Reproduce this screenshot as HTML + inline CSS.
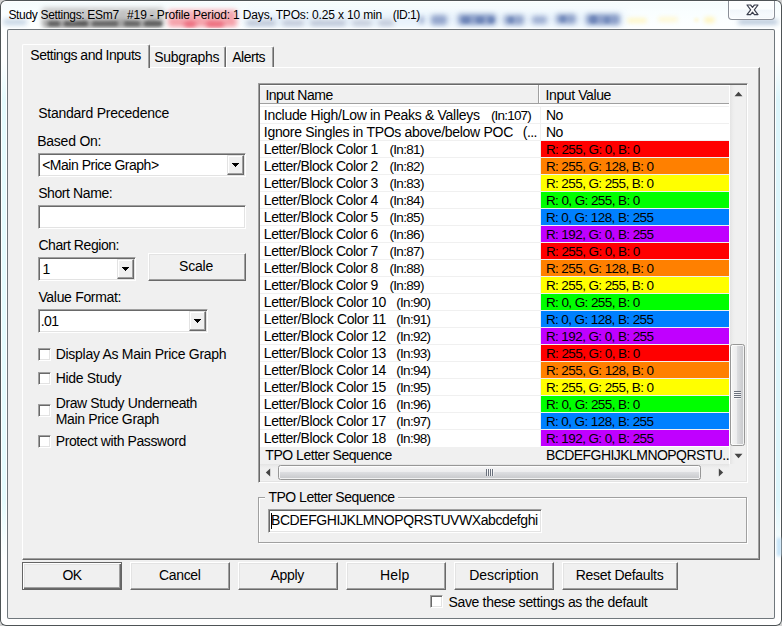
<!DOCTYPE html>
<html><head><meta charset="utf-8"><title>Study Settings</title>
<style>
*{box-sizing:border-box;margin:0;padding:0}
html,body{width:782px;height:626px;overflow:hidden;background:#d0d0d0}
body{font-family:"Liberation Sans",Arial,sans-serif;font-size:14px;color:#000;position:relative}
#ui,#ui *{position:absolute}
#win{position:absolute;left:0;top:0;width:782px;height:626px;border-radius:6px;overflow:hidden;
 background:linear-gradient(#f5fcfd,#f9feff 12px,#fdffff 28px,#fff 40px,#fff);
 box-shadow:inset 0 0 0 1px #4e5456, inset 0 0 0 2px rgba(255,255,255,.9)}
#win *{position:absolute}
#client{left:8px;top:30px;width:766px;height:588px;background:#f0f0f0;border-radius:1px;
 box-shadow:0 0 0 1px #70777c, 0 0 0 2px rgba(255,255,255,.7)}
.t{white-space:pre;line-height:15px;transform-origin:0 0}
.tt{text-shadow:0 0 4px rgba(255,255,255,.6),0 0 8px rgba(255,255,255,.5)}
.sunken{background:#fff;border:1px solid;border-color:#a0a0a0 #fff #fff #a0a0a0;
 box-shadow:inset 1px 1px 0 #696969, inset -1px -1px 0 #e3e3e3}
.btn{background:#f0f0f0;border:1px solid;border-color:#fff #696969 #696969 #fff;
 box-shadow:inset -1px -1px 0 #a0a0a0, inset 1px 1px 0 #e3e3e3}
.btn.def{border-color:#646464;box-shadow:inset 1px 1px 0 #fff,inset -1px -1px 0 #696969,inset -2px -2px 0 #a0a0a0,inset 2px 2px 0 #e3e3e3}
.dd{width:17px;height:20px;background:#f0f0f0;border:1px solid;border-color:#e3e3e3 #696969 #696969 #e3e3e3;
 box-shadow:inset -1px -1px 0 #a0a0a0, inset 1px 1px 0 #fff}
.cb{width:13px;height:13px;background:#fff;border:1px solid;border-color:#a0a0a0 #fff #fff #a0a0a0;
 box-shadow:inset 1px 1px 0 #696969, inset -1px -1px 0 #e3e3e3}
.bl{filter:blur(2.2px);border-radius:3px}
</style></head><body>

<div id="win">
<div style="left:3px;top:19px;width:24px;height:6px;background:#c4d4e4;filter:blur(2.5px);border-radius:3px"></div>
<div style="left:244px;top:12px;width:380px;height:15px;background:#e6f1fb;filter:blur(4px);border-radius:3px"></div>
<div style="left:42px;top:8px;width:122px;height:19px;background:#c2c2c2;filter:blur(2.5px);border-radius:3px"></div>
<div style="left:44px;top:20px;width:118px;height:7px;background:#999;filter:blur(2.5px);border-radius:3px"></div>
<div style="left:48px;top:21px;width:12px;height:5px;background:#606060;filter:blur(1.8px);border-radius:3px"></div>
<div style="left:64px;top:21px;width:24px;height:5px;background:#5a5a5a;filter:blur(1.8px);border-radius:3px"></div>
<div style="left:92px;top:21px;width:26px;height:5px;background:#666;filter:blur(1.8px);border-radius:3px"></div>
<div style="left:124px;top:21px;width:16px;height:5px;background:#666;filter:blur(1.8px);border-radius:3px"></div>
<div style="left:144px;top:21px;width:18px;height:5px;background:#606060;filter:blur(1.8px);border-radius:3px"></div>
<div style="left:168px;top:10px;width:69px;height:17px;background:#f5a0a9;filter:blur(2.5px);border-radius:3px"></div>
<div style="left:184px;top:21px;width:12px;height:6px;background:#ec6a7c;filter:blur(2px);border-radius:3px"></div>
<div style="left:206px;top:21px;width:18px;height:6px;background:#ec6a7c;filter:blur(2px);border-radius:3px"></div>
<div style="left:246px;top:20px;width:30px;height:6px;background:#bcc5d6;filter:blur(2.5px);border-radius:3px"></div>
<div style="left:282px;top:20px;width:22px;height:6px;background:#c0c8d8;filter:blur(2.5px);border-radius:3px"></div>
<div style="left:310px;top:20px;width:36px;height:6px;background:#bcc5d6;filter:blur(2.5px);border-radius:3px"></div>
<div style="left:352px;top:20px;width:20px;height:6px;background:#c4ccda;filter:blur(2.5px);border-radius:3px"></div>
<div style="left:378px;top:20px;width:16px;height:6px;background:#c0c8d8;filter:blur(2.5px);border-radius:3px"></div>
<div style="left:419px;top:16px;width:5px;height:8px;background:#a4b4d4;filter:blur(2.2px);border-radius:3px"></div>
<div style="left:431px;top:15px;width:16px;height:10px;background:#94a6cc;filter:blur(2.4px);border-radius:3px"></div>
<div style="left:458px;top:14px;width:38px;height:11px;background:#8a9ec8;filter:blur(2.4px);border-radius:3px"></div>
<div style="left:504px;top:15px;width:20px;height:10px;background:#94a6cc;filter:blur(2.4px);border-radius:3px"></div>
<div style="left:532px;top:16px;width:15px;height:8px;background:#9eafd2;filter:blur(2.4px);border-radius:3px"></div>
<div style="left:556px;top:14px;width:20px;height:10px;background:#90a3ca;filter:blur(2.4px);border-radius:3px"></div>
<div style="left:586px;top:14px;width:34px;height:11px;background:#8a9ec8;filter:blur(2.4px);border-radius:3px"></div>
<div style="left:462px;top:17px;width:8px;height:6px;background:#6e86b8;filter:blur(1.6px);border-radius:3px"></div>
<div style="left:476px;top:17px;width:8px;height:6px;background:#6e86b8;filter:blur(1.6px);border-radius:3px"></div>
<div style="left:488px;top:17px;width:6px;height:6px;background:#6e86b8;filter:blur(1.6px);border-radius:3px"></div>
<div style="left:508px;top:17px;width:6px;height:6px;background:#748cbc;filter:blur(1.6px);border-radius:3px"></div>
<div style="left:560px;top:16px;width:6px;height:6px;background:#748cbc;filter:blur(1.6px);border-radius:3px"></div>
<div style="left:590px;top:16px;width:7px;height:7px;background:#6e86b8;filter:blur(1.6px);border-radius:3px"></div>
<div style="left:604px;top:17px;width:6px;height:6px;background:#748cbc;filter:blur(1.6px);border-radius:3px"></div>
<div style="left:627px;top:18px;width:20px;height:5px;background:#fff7c8;filter:blur(2px);border-radius:3px"></div>
<div style="left:658px;top:17px;width:20px;height:5px;background:#fff8d4;filter:blur(2px);border-radius:3px"></div>
<div style="left:694px;top:18px;width:5px;height:4px;background:#fff8d4;filter:blur(1.5px);border-radius:3px"></div>
<div style="left:704px;top:17px;width:11px;height:6px;background:#fff5c0;filter:blur(2px);border-radius:3px"></div>
<div style="left:738px;top:20px;width:40px;height:4px;background:#a4b8d0;filter:blur(2.5px);border-radius:3px"></div>
<div id="close" style="left:728px;top:1px;width:47px;height:19px;border:1px solid #8a8f98;border-top:0;border-radius:0 0 4px 4px;background:linear-gradient(rgba(255,255,255,.75),rgba(255,255,255,.55) 45%,rgba(236,241,247,.6) 50%,rgba(250,252,254,.7));box-shadow:inset 0 0 0 1px rgba(255,255,255,.8)"></div>
<svg style="left:746px;top:4px" width="13" height="12" viewBox="0 0 13 12"><path d="M1 1h3.6l1.9 2.3 1.9-2.3h3.6L8.3 5.8 12 10.6h-3.6l-1.9-2.4-1.9 2.4h-3.6l3.7-4.8z" fill="#fff" stroke="#3a3f4d" stroke-width="1.2" stroke-linejoin="round"/></svg>
<div class="t tt" style="left:8.40px;top:7px;line-height:17px;font-size:12px;letter-spacing:-0.318px;color:#000">Study Settings: ESm7</div>
<div class="t tt" style="left:127.10px;top:7px;line-height:17px;font-size:12px;letter-spacing:-0.154px">#19 - Profile Period: 1 Days, TPOs: 0.25 x 10 min</div>
<div class="t tt" style="left:392.80px;top:7px;line-height:17px;font-size:12px;letter-spacing:-0.521px">(ID:1)</div>
<div style="left:2px;top:60px;width:4px;height:500px;background:linear-gradient(rgba(228,251,253,0),#e4fbfd 40px,#e4fbfd 440px,rgba(228,251,253,0))"></div>
<div style="left:776px;top:60px;width:4px;height:500px;background:linear-gradient(rgba(221,246,252,0),#ddf6fc 40px,#ddf6fc 440px,rgba(221,246,252,0))"></div>
<div style="left:777px;top:538px;width:4px;height:18px;background:#bfe0f8;filter:blur(1.5px)"></div>
<div id="client"></div>
</div>
<div id="ui" style="left:0;top:0">
<div id="pane" style="left:22px;top:67px;width:738px;height:493px;border:1px solid;border-color:#fff #696969 #696969 #fff;box-shadow:inset -1px -1px 0 #a0a0a0"></div>
<div id="tab1" style="left:22px;top:44px;width:128px;height:24px;background:#f0f0f0;border:1px solid;border-color:#fff #696969 transparent #fff;border-bottom:0;box-shadow:inset -1px 0 0 #a0a0a0;border-radius:2px 2px 0 0"></div>
<div id="tab2" style="left:150px;top:46px;width:76px;height:21px;border:1px solid;border-color:#fff #696969 transparent transparent;border-bottom:0;box-shadow:inset -1px 0 0 #a0a0a0;border-radius:0 2px 0 0"></div>
<div id="tab3" style="left:226px;top:46px;width:48px;height:21px;border:1px solid;border-color:#fff #696969 transparent #fff;border-bottom:0;box-shadow:inset -1px 0 0 #a0a0a0;border-radius:2px 2px 0 0"></div>
<div class="sunken" style="left:38px;top:153px;width:208px;height:24px"></div><div class="dd" style="left:227px;top:155px"></div><svg style="left:232px;top:163px" width="7" height="4" viewBox="0 0 7 4" shape-rendering="crispEdges"><path d="M0 0h7v1h-7zM1 1h5v1h-5zM2 2h3v1h-3zM3 3h1v1h-1z" fill="#000"/></svg>
<div class="sunken" style="left:38px;top:205px;width:208px;height:24px"></div>
<div class="sunken" style="left:38px;top:257px;width:98px;height:24px"></div><div class="dd" style="left:117px;top:259px"></div><svg style="left:122px;top:267px" width="7" height="4" viewBox="0 0 7 4" shape-rendering="crispEdges"><path d="M0 0h7v1h-7zM1 1h5v1h-5zM2 2h3v1h-3zM3 3h1v1h-1z" fill="#000"/></svg>
<div class="btn" style="left:148px;top:253px;width:98px;height:28px"></div>
<div class="sunken" style="left:38px;top:309px;width:170px;height:24px"></div><div class="dd" style="left:189px;top:311px"></div><svg style="left:194px;top:319px" width="7" height="4" viewBox="0 0 7 4" shape-rendering="crispEdges"><path d="M0 0h7v1h-7zM1 1h5v1h-5zM2 2h3v1h-3zM3 3h1v1h-1z" fill="#000"/></svg>
<div class="cb" style="left:38px;top:348px"></div>
<div class="cb" style="left:38px;top:372px"></div>
<div class="cb" style="left:38px;top:404px"></div>
<div class="cb" style="left:38px;top:435px"></div>
<div id="lv" class="sunken" style="left:258px;top:83px;width:490px;height:400px"></div>
<div style="left:260px;top:85px;width:469px;height:19px;background:#f0f0f0;border-bottom:1px solid #a0a0a0;box-shadow:inset 0 1px 0 #fff"></div>
<div style="left:538px;top:85px;width:1px;height:18px;background:#a0a0a0"></div><div style="left:539px;top:85px;width:1px;height:18px;background:#fff"></div>
<div style="left:540px;top:106px;width:1px;height:358px;background:#f0f0f0"></div>
<div style="left:260px;top:106px;width:469px;height:1px;background:#f0f0f0"></div>
<div style="left:260px;top:123px;width:469px;height:1px;background:#f0f0f0"></div>
<div style="left:260px;top:140px;width:469px;height:1px;background:#f0f0f0"></div>
<div style="left:541px;top:141px;width:188px;height:16px;background:#ff0000"></div>
<div style="left:260px;top:157px;width:469px;height:1px;background:#f0f0f0"></div>
<div style="left:541px;top:158px;width:188px;height:16px;background:#ff8000"></div>
<div style="left:260px;top:174px;width:469px;height:1px;background:#f0f0f0"></div>
<div style="left:541px;top:175px;width:188px;height:16px;background:#ffff00"></div>
<div style="left:260px;top:191px;width:469px;height:1px;background:#f0f0f0"></div>
<div style="left:541px;top:192px;width:188px;height:16px;background:#00ff00"></div>
<div style="left:260px;top:208px;width:469px;height:1px;background:#f0f0f0"></div>
<div style="left:541px;top:209px;width:188px;height:16px;background:#0080ff"></div>
<div style="left:260px;top:225px;width:469px;height:1px;background:#f0f0f0"></div>
<div style="left:541px;top:226px;width:188px;height:16px;background:#c000ff"></div>
<div style="left:260px;top:242px;width:469px;height:1px;background:#f0f0f0"></div>
<div style="left:541px;top:243px;width:188px;height:16px;background:#ff0000"></div>
<div style="left:260px;top:259px;width:469px;height:1px;background:#f0f0f0"></div>
<div style="left:541px;top:260px;width:188px;height:16px;background:#ff8000"></div>
<div style="left:260px;top:276px;width:469px;height:1px;background:#f0f0f0"></div>
<div style="left:541px;top:277px;width:188px;height:16px;background:#ffff00"></div>
<div style="left:260px;top:293px;width:469px;height:1px;background:#f0f0f0"></div>
<div style="left:541px;top:294px;width:188px;height:16px;background:#00ff00"></div>
<div style="left:260px;top:310px;width:469px;height:1px;background:#f0f0f0"></div>
<div style="left:541px;top:311px;width:188px;height:16px;background:#0080ff"></div>
<div style="left:260px;top:327px;width:469px;height:1px;background:#f0f0f0"></div>
<div style="left:541px;top:328px;width:188px;height:16px;background:#c000ff"></div>
<div style="left:260px;top:344px;width:469px;height:1px;background:#f0f0f0"></div>
<div style="left:541px;top:345px;width:188px;height:16px;background:#ff0000"></div>
<div style="left:260px;top:361px;width:469px;height:1px;background:#f0f0f0"></div>
<div style="left:541px;top:362px;width:188px;height:16px;background:#ff8000"></div>
<div style="left:260px;top:378px;width:469px;height:1px;background:#f0f0f0"></div>
<div style="left:541px;top:379px;width:188px;height:16px;background:#ffff00"></div>
<div style="left:260px;top:395px;width:469px;height:1px;background:#f0f0f0"></div>
<div style="left:541px;top:396px;width:188px;height:16px;background:#00ff00"></div>
<div style="left:260px;top:412px;width:469px;height:1px;background:#f0f0f0"></div>
<div style="left:541px;top:413px;width:188px;height:16px;background:#0080ff"></div>
<div style="left:260px;top:429px;width:469px;height:1px;background:#f0f0f0"></div>
<div style="left:541px;top:430px;width:188px;height:16px;background:#c000ff"></div>
<div style="left:260px;top:447px;width:469px;height:17px;background:#f0f0f0"></div>
<div id="vs" style="left:729px;top:85px;width:17px;height:379px;background:linear-gradient(90deg,#fff 0,#fff 1px,#e4e4e4 1px,#ededed 4px,#f0f0f0 6px)"></div>
<svg style="left:734px;top:91px" width="9" height="6" viewBox="0 0 9 6"><path d="M0.5 5.2L4.5 0.8L8.5 5.2z" fill="#454545"/></svg>
<div id="vth" style="left:730px;top:344px;width:15px;height:102px;border:1px solid #979797;border-radius:2.5px;background:linear-gradient(90deg,#f6f6f6,#ececee 45%,#dcdde0 50%,#c6c7ca);box-shadow:inset 0 0 0 1px rgba(255,255,255,.75)"></div>
<div style="left:734px;top:391px;width:7px;height:8px;background:repeating-linear-gradient(#6a707c 0,#6a707c 1px,rgba(255,255,255,.6) 1px,rgba(255,255,255,.6) 2px)"></div>
<svg style="left:734px;top:453px" width="9" height="6" viewBox="0 0 9 6"><path d="M0.5 0.8L4.5 5.2L8.5 0.8z" fill="#454545"/></svg>
<div id="hs" style="left:260px;top:464px;width:469px;height:17px;background:linear-gradient(#e4e4e4,#ededed 3px,#f0f0f0 5px)"></div>
<div style="left:729px;top:464px;width:17px;height:17px;background:#f0f0f0"></div>
<svg style="left:265px;top:468px" width="6" height="9" viewBox="0 0 6 9"><path d="M5.2 0.5L0.8 4.5L5.2 8.5z" fill="#454545"/></svg>
<div id="hth" style="left:278px;top:465px;width:423px;height:15px;border:1px solid #979797;border-radius:2.5px;background:linear-gradient(#f6f6f6,#ececee 45%,#dcdde0 50%,#c6c7ca);box-shadow:inset 0 0 0 1px rgba(255,255,255,.75)"></div>
<div style="left:486px;top:469px;width:8px;height:7px;background:repeating-linear-gradient(90deg,#6a707c 0,#6a707c 1px,rgba(255,255,255,.6) 1px,rgba(255,255,255,.6) 2px)"></div>
<svg style="left:718px;top:468px" width="6" height="9" viewBox="0 0 6 9"><path d="M0.8 0.5L5.2 4.5L0.8 8.5z" fill="#454545"/></svg>
<div style="left:258px;top:497px;width:489px;height:46px;border:1px solid #a0a0a0;box-shadow:inset 1px 1px 0 #fff, 1px 1px 0 #fff"></div>
<div style="left:265px;top:495px;width:133px;height:5px;background:#f0f0f0"></div>
<div class="sunken" style="left:268px;top:509px;width:274px;height:24px"></div>
<div style="left:271px;top:513px;width:1px;height:16px;background:#000"></div>
<div class="btn def" style="left:22px;top:562px;width:100px;height:28px"></div>
<div class="btn" style="left:130px;top:562px;width:100px;height:28px"></div>
<div class="btn" style="left:238px;top:562px;width:100px;height:28px"></div>
<div class="btn" style="left:346px;top:562px;width:100px;height:28px"></div>
<div class="btn" style="left:454px;top:562px;width:100px;height:28px"></div>
<div class="btn" style="left:562px;top:562px;width:116px;height:28px"></div>
<div class="cb" style="left:430px;top:595px"></div>
<div class="t" style="left:30.30px;top:48px;line-height:15px;letter-spacing:-0.492px">Settings and Inputs</div>
<div class="t" style="left:154.30px;top:50px;line-height:15px;letter-spacing:-0.315px">Subgraphs</div>
<div class="t" style="left:232.30px;top:50px;line-height:15px;letter-spacing:-0.517px">Alerts</div>
<div class="t" style="left:38.20px;top:106px;line-height:15px;letter-spacing:-0.241px">Standard Precedence</div>
<div class="t" style="left:37.20px;top:134px;line-height:15px;letter-spacing:-0.233px">Based On:</div>
<div class="t" style="left:42.20px;top:158px;line-height:15px;letter-spacing:-0.494px">&lt;Main Price Graph&gt;</div>
<div class="t" style="left:38.20px;top:186px;line-height:15px;letter-spacing:-0.410px">Short Name:</div>
<div class="t" style="left:38.40px;top:238px;line-height:15px;letter-spacing:-0.441px">Chart Region:</div>
<div class="t" style="left:42.50px;top:262px;line-height:15px">1</div>
<div class="t" style="left:179.10px;top:259px;line-height:15px;letter-spacing:-0.234px">Scale</div>
<div class="t" style="left:38.40px;top:290px;line-height:15px;letter-spacing:-0.316px">Value Format:</div>
<div class="t" style="left:40.66px;top:314px;line-height:15px;letter-spacing:-0.600px">.01</div>
<div class="t" style="left:55.70px;top:347px;line-height:15px;letter-spacing:-0.279px">Display As Main Price Graph</div>
<div class="t" style="left:55.70px;top:371px;line-height:15px;letter-spacing:-0.309px">Hide Study</div>
<div class="t" style="left:55.70px;top:395px;line-height:16px;letter-spacing:-0.386px">Draw Study Underneath</div>
<div class="t" style="left:55.70px;top:411px;line-height:16px;letter-spacing:-0.350px">Main Price Graph</div>
<div class="t" style="left:55.70px;top:434px;line-height:15px;letter-spacing:-0.400px">Protect with Password</div>
<div class="t" style="left:265.40px;top:88px;line-height:15px;letter-spacing:-0.510px">Input Name</div>
<div class="t" style="left:545.50px;top:88px;line-height:15px;letter-spacing:-0.391px">Input Value</div>
<div class="t" style="left:263.80px;top:107px;line-height:17px;letter-spacing:-0.297px">Include High/Low in Peaks &amp; Valleys</div>
<div class="t" style="left:490.89px;top:107px;line-height:17px;font-size:13.5px;letter-spacing:-0.800px">(In:107)</div>
<div class="t" style="left:545.90px;top:107px;line-height:17px;letter-spacing:-0.510px">No</div>
<div class="t" style="left:263.80px;top:124px;line-height:17px;letter-spacing:-0.297px">Ignore Singles in TPOs above/below POC</div>
<div class="t" style="left:522.83px;top:124px;line-height:17px;letter-spacing:-0.600px">(...</div>
<div class="t" style="left:545.90px;top:124px;line-height:17px;letter-spacing:-0.510px">No</div>
<div class="t" style="left:263.80px;top:141px;line-height:17px;letter-spacing:-0.440px">Letter/Block Color 1</div>
<div class="t" style="left:389.40px;top:141px;line-height:17px;font-size:13.5px;letter-spacing:-0.670px">(In:81)</div>
<div class="t" style="left:545.90px;top:141px;line-height:17px;font-size:13.5px;letter-spacing:-0.582px">R: 255, G: 0, B: 0</div>
<div class="t" style="left:263.80px;top:158px;line-height:17px;letter-spacing:-0.440px">Letter/Block Color 2</div>
<div class="t" style="left:389.40px;top:158px;line-height:17px;font-size:13.5px;letter-spacing:-0.670px">(In:82)</div>
<div class="t" style="left:545.90px;top:158px;line-height:17px;font-size:13.5px;letter-spacing:-0.590px">R: 255, G: 128, B: 0</div>
<div class="t" style="left:263.80px;top:175px;line-height:17px;letter-spacing:-0.440px">Letter/Block Color 3</div>
<div class="t" style="left:389.40px;top:175px;line-height:17px;font-size:13.5px;letter-spacing:-0.670px">(In:83)</div>
<div class="t" style="left:545.90px;top:175px;line-height:17px;font-size:13.5px;letter-spacing:-0.590px">R: 255, G: 255, B: 0</div>
<div class="t" style="left:263.80px;top:192px;line-height:17px;letter-spacing:-0.440px">Letter/Block Color 4</div>
<div class="t" style="left:389.40px;top:192px;line-height:17px;font-size:13.5px;letter-spacing:-0.670px">(In:84)</div>
<div class="t" style="left:545.90px;top:192px;line-height:17px;font-size:13.5px;letter-spacing:-0.582px">R: 0, G: 255, B: 0</div>
<div class="t" style="left:263.80px;top:209px;line-height:17px;letter-spacing:-0.440px">Letter/Block Color 5</div>
<div class="t" style="left:389.40px;top:209px;line-height:17px;font-size:13.5px;letter-spacing:-0.670px">(In:85)</div>
<div class="t" style="left:545.90px;top:209px;line-height:17px;font-size:13.5px;letter-spacing:-0.590px">R: 0, G: 128, B: 255</div>
<div class="t" style="left:263.80px;top:226px;line-height:17px;letter-spacing:-0.440px">Letter/Block Color 6</div>
<div class="t" style="left:389.40px;top:226px;line-height:17px;font-size:13.5px;letter-spacing:-0.670px">(In:86)</div>
<div class="t" style="left:545.90px;top:226px;line-height:17px;font-size:13.5px;letter-spacing:-0.590px">R: 192, G: 0, B: 255</div>
<div class="t" style="left:263.80px;top:243px;line-height:17px;letter-spacing:-0.440px">Letter/Block Color 7</div>
<div class="t" style="left:389.40px;top:243px;line-height:17px;font-size:13.5px;letter-spacing:-0.670px">(In:87)</div>
<div class="t" style="left:545.90px;top:243px;line-height:17px;font-size:13.5px;letter-spacing:-0.582px">R: 255, G: 0, B: 0</div>
<div class="t" style="left:263.80px;top:260px;line-height:17px;letter-spacing:-0.440px">Letter/Block Color 8</div>
<div class="t" style="left:389.40px;top:260px;line-height:17px;font-size:13.5px;letter-spacing:-0.670px">(In:88)</div>
<div class="t" style="left:545.90px;top:260px;line-height:17px;font-size:13.5px;letter-spacing:-0.590px">R: 255, G: 128, B: 0</div>
<div class="t" style="left:263.80px;top:277px;line-height:17px;letter-spacing:-0.440px">Letter/Block Color 9</div>
<div class="t" style="left:389.40px;top:277px;line-height:17px;font-size:13.5px;letter-spacing:-0.670px">(In:89)</div>
<div class="t" style="left:545.90px;top:277px;line-height:17px;font-size:13.5px;letter-spacing:-0.590px">R: 255, G: 255, B: 0</div>
<div class="t" style="left:263.80px;top:294px;line-height:17px;letter-spacing:-0.412px">Letter/Block Color 10</div>
<div class="t" style="left:396.20px;top:294px;line-height:17px;font-size:13.5px;letter-spacing:-0.687px">(In:90)</div>
<div class="t" style="left:545.90px;top:294px;line-height:17px;font-size:13.5px;letter-spacing:-0.582px">R: 0, G: 255, B: 0</div>
<div class="t" style="left:263.80px;top:311px;line-height:17px;letter-spacing:-0.360px">Letter/Block Color 11</div>
<div class="t" style="left:396.20px;top:311px;line-height:17px;font-size:13.5px;letter-spacing:-0.687px">(In:91)</div>
<div class="t" style="left:545.90px;top:311px;line-height:17px;font-size:13.5px;letter-spacing:-0.590px">R: 0, G: 128, B: 255</div>
<div class="t" style="left:263.80px;top:328px;line-height:17px;letter-spacing:-0.412px">Letter/Block Color 12</div>
<div class="t" style="left:396.20px;top:328px;line-height:17px;font-size:13.5px;letter-spacing:-0.687px">(In:92)</div>
<div class="t" style="left:545.90px;top:328px;line-height:17px;font-size:13.5px;letter-spacing:-0.590px">R: 192, G: 0, B: 255</div>
<div class="t" style="left:263.80px;top:345px;line-height:17px;letter-spacing:-0.412px">Letter/Block Color 13</div>
<div class="t" style="left:396.20px;top:345px;line-height:17px;font-size:13.5px;letter-spacing:-0.687px">(In:93)</div>
<div class="t" style="left:545.90px;top:345px;line-height:17px;font-size:13.5px;letter-spacing:-0.582px">R: 255, G: 0, B: 0</div>
<div class="t" style="left:263.80px;top:362px;line-height:17px;letter-spacing:-0.412px">Letter/Block Color 14</div>
<div class="t" style="left:396.20px;top:362px;line-height:17px;font-size:13.5px;letter-spacing:-0.687px">(In:94)</div>
<div class="t" style="left:545.90px;top:362px;line-height:17px;font-size:13.5px;letter-spacing:-0.590px">R: 255, G: 128, B: 0</div>
<div class="t" style="left:263.80px;top:379px;line-height:17px;letter-spacing:-0.412px">Letter/Block Color 15</div>
<div class="t" style="left:396.20px;top:379px;line-height:17px;font-size:13.5px;letter-spacing:-0.687px">(In:95)</div>
<div class="t" style="left:545.90px;top:379px;line-height:17px;font-size:13.5px;letter-spacing:-0.590px">R: 255, G: 255, B: 0</div>
<div class="t" style="left:263.80px;top:396px;line-height:17px;letter-spacing:-0.412px">Letter/Block Color 16</div>
<div class="t" style="left:396.20px;top:396px;line-height:17px;font-size:13.5px;letter-spacing:-0.687px">(In:96)</div>
<div class="t" style="left:545.90px;top:396px;line-height:17px;font-size:13.5px;letter-spacing:-0.582px">R: 0, G: 255, B: 0</div>
<div class="t" style="left:263.80px;top:413px;line-height:17px;letter-spacing:-0.412px">Letter/Block Color 17</div>
<div class="t" style="left:396.20px;top:413px;line-height:17px;font-size:13.5px;letter-spacing:-0.687px">(In:97)</div>
<div class="t" style="left:545.90px;top:413px;line-height:17px;font-size:13.5px;letter-spacing:-0.590px">R: 0, G: 128, B: 255</div>
<div class="t" style="left:263.80px;top:430px;line-height:17px;letter-spacing:-0.412px">Letter/Block Color 18</div>
<div class="t" style="left:396.20px;top:430px;line-height:17px;font-size:13.5px;letter-spacing:-0.687px">(In:98)</div>
<div class="t" style="left:545.90px;top:430px;line-height:17px;font-size:13.5px;letter-spacing:-0.590px">R: 192, G: 0, B: 255</div>
<div class="t" style="left:265.30px;top:447px;line-height:17px;letter-spacing:-0.468px">TPO Letter Sequence</div>
<div style="left:541px;top:447px;width:188px;height:17px;overflow:hidden"><div class="t" style="left:calc(-541px + 545.90px);top:0px;line-height:17px;letter-spacing:-0.552px">BCDEFGHIJKLMNOPQRSTU...</div></div>
<div class="t" style="left:268.40px;top:490px;line-height:15px;letter-spacing:-0.490px">TPO Letter Sequence</div>
<div style="left:270px;top:512px;width:270px;height:18px;overflow:hidden"><div class="t" style="left:calc(-270px + 271.00px);top:1px;line-height:15px;letter-spacing:-0.418px">BCDEFGHIJKLMNOPQRSTUVWXabcdefghi</div></div>
<div class="t" style="left:62.56px;top:568px;line-height:15px;letter-spacing:-0.600px">OK</div>
<div class="t" style="left:159.10px;top:568px;line-height:15px;letter-spacing:-0.354px">Cancel</div>
<div class="t" style="left:270.40px;top:568px;line-height:15px;letter-spacing:-0.280px">Apply</div>
<div class="t" style="left:380.10px;top:568px;line-height:15px;letter-spacing:0.098px">Help</div>
<div class="t" style="left:469.30px;top:568px;line-height:15px;letter-spacing:-0.084px">Description</div>
<div class="t" style="left:575.80px;top:568px;line-height:15px;letter-spacing:-0.302px">Reset Defaults</div>
<div class="t" style="left:448.50px;top:595px;line-height:15px;letter-spacing:-0.335px">Save these settings as the default</div>
</div>
</body></html>
